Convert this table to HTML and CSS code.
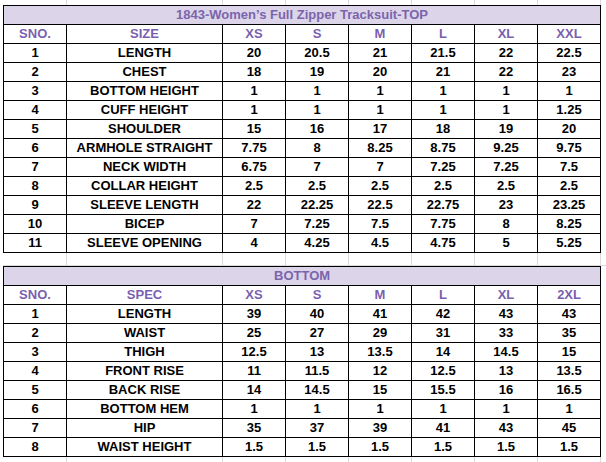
FILE: index.html
```html
<!DOCTYPE html>
<html>
<head>
<meta charset="utf-8">
<link rel="stylesheet" href="styles.css">
</head>
<body>
<div class="sheet">
  <table class="spec">
    <colgroup>
      <col class="c-sno"><col class="c-name"><col class="c-v"><col class="c-v"><col class="c-v"><col class="c-v"><col class="c-v"><col class="c-v">
    </colgroup>
    <tr class="title"><td colspan="8">1843-Women’s Full Zipper Tracksuit-TOP</td></tr>
    <tr class="head"><td>SNO.</td><td>SIZE</td><td>XS</td><td>S</td><td>M</td><td>L</td><td>XL</td><td>XXL</td></tr>
    <tr><td>1</td><td>LENGTH</td><td>20</td><td>20.5</td><td>21</td><td>21.5</td><td>22</td><td>22.5</td></tr>
    <tr><td>2</td><td>CHEST</td><td>18</td><td>19</td><td>20</td><td>21</td><td>22</td><td>23</td></tr>
    <tr><td>3</td><td>BOTTOM HEIGHT</td><td>1</td><td>1</td><td>1</td><td>1</td><td>1</td><td>1</td></tr>
    <tr><td>4</td><td>CUFF HEIGHT</td><td>1</td><td>1</td><td>1</td><td>1</td><td>1</td><td>1.25</td></tr>
    <tr><td>5</td><td>SHOULDER</td><td>15</td><td>16</td><td>17</td><td>18</td><td>19</td><td>20</td></tr>
    <tr><td>6</td><td>ARMHOLE STRAIGHT</td><td>7.75</td><td>8</td><td>8.25</td><td>8.75</td><td>9.25</td><td>9.75</td></tr>
    <tr><td>7</td><td>NECK WIDTH</td><td>6.75</td><td>7</td><td>7</td><td>7.25</td><td>7.25</td><td>7.5</td></tr>
    <tr><td>8</td><td>COLLAR HEIGHT</td><td>2.5</td><td>2.5</td><td>2.5</td><td>2.5</td><td>2.5</td><td>2.5</td></tr>
    <tr><td>9</td><td>SLEEVE LENGTH</td><td>22</td><td>22.25</td><td>22.5</td><td>22.75</td><td>23</td><td>23.25</td></tr>
    <tr><td>10</td><td>BICEP</td><td>7</td><td>7.25</td><td>7.5</td><td>7.75</td><td>8</td><td>8.25</td></tr>
    <tr><td>11</td><td>SLEEVE OPENING</td><td>4</td><td>4.25</td><td>4.5</td><td>4.75</td><td>5</td><td>5.25</td></tr>
  </table>
  <div class="gap"></div>
  <table class="spec">
    <colgroup>
      <col class="c-sno"><col class="c-name"><col class="c-v"><col class="c-v"><col class="c-v"><col class="c-v"><col class="c-v"><col class="c-v">
    </colgroup>
    <tr class="title"><td colspan="8">BOTTOM</td></tr>
    <tr class="head"><td>SNO.</td><td>SPEC</td><td>XS</td><td>S</td><td>M</td><td>L</td><td>XL</td><td>2XL</td></tr>
    <tr><td>1</td><td>LENGTH</td><td>39</td><td>40</td><td>41</td><td>42</td><td>43</td><td>43</td></tr>
    <tr><td>2</td><td>WAIST</td><td>25</td><td>27</td><td>29</td><td>31</td><td>33</td><td>35</td></tr>
    <tr><td>3</td><td>THIGH</td><td>12.5</td><td>13</td><td>13.5</td><td>14</td><td>14.5</td><td>15</td></tr>
    <tr><td>4</td><td>FRONT RISE</td><td>11</td><td>11.5</td><td>12</td><td>12.5</td><td>13</td><td>13.5</td></tr>
    <tr><td>5</td><td>BACK RISE</td><td>14</td><td>14.5</td><td>15</td><td>15.5</td><td>16</td><td>16.5</td></tr>
    <tr><td>6</td><td>BOTTOM HEM</td><td>1</td><td>1</td><td>1</td><td>1</td><td>1</td><td>1</td></tr>
    <tr><td>7</td><td>HIP</td><td>35</td><td>37</td><td>39</td><td>41</td><td>43</td><td>45</td></tr>
    <tr><td>8</td><td>WAIST HEIGHT</td><td>1.5</td><td>1.5</td><td>1.5</td><td>1.5</td><td>1.5</td><td>1.5</td></tr>
  </table>
</div>
</body>
</html>
```

FILE: styles.css
```css
html, body {
  margin: 0;
  padding: 0;
  background: #ffffff;
}
body {
  width: 606px;
  height: 462px;
  overflow: hidden;
  font-family: "Liberation Sans", Arial, sans-serif;
}
.sheet {
  padding: 5px 0 0 3px;
  min-height: 462px;
  box-sizing: border-box;
  background-image: linear-gradient(90deg,
    transparent 66px, #dadada 66px, #dadada 67px,
    transparent 67px, transparent 222px, #dadada 222px, #dadada 223px,
    transparent 223px, transparent 285px, #dadada 285px, #dadada 286px,
    transparent 286px, transparent 348px, #dadada 348px, #dadada 349px,
    transparent 349px, transparent 411px, #dadada 411px, #dadada 412px,
    transparent 412px, transparent 474px, #dadada 474px, #dadada 475px,
    transparent 475px, transparent 537px, #dadada 537px, #dadada 538px,
    transparent 538px, transparent 600px, #dadada 600px, #dadada 601px,
    transparent 601px);
}
.spec {
  border-collapse: collapse;
  table-layout: fixed;
  width: 598px;
  background: #ffffff;
}
.c-sno { width: 63px; }
.c-name { width: 156px; }
.c-v { width: 63px; }
.spec td {
  border: 1px solid #000000;
  height: 18px;
  padding: 0;
  text-align: center;
  vertical-align: middle;
  font-weight: bold;
  font-size: 13px;
  line-height: 16px;
  color: #000000;
  white-space: nowrap;
  overflow: hidden;
}
.spec tr.title td {
  background: #dcd5e9;
  color: #7b64ab;
  font-size: 13px;
}
.spec tr.head td {
  color: #7a5fb0;
}
.gap {
  height: 12px;
  border-bottom: 1px solid #dadada;
}
```
